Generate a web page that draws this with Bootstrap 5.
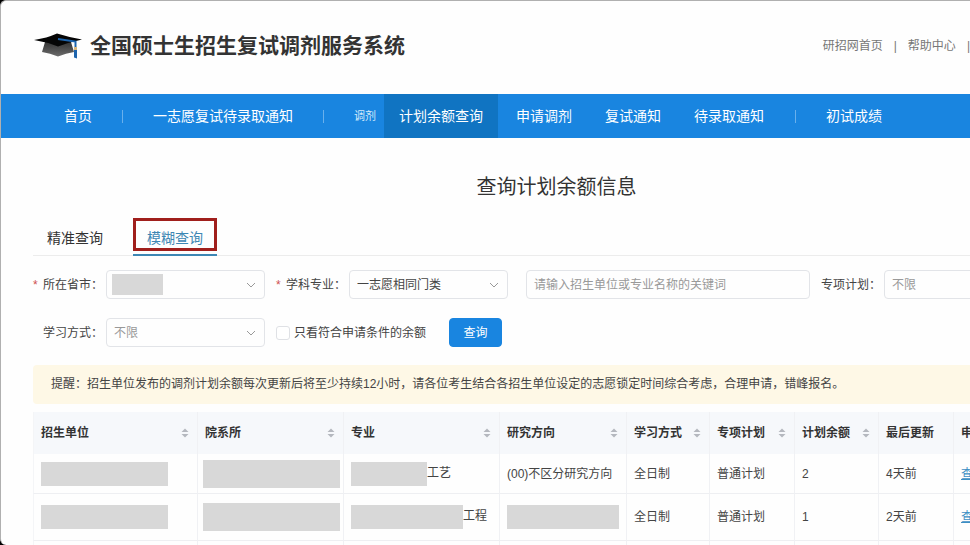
<!DOCTYPE html>
<html lang="zh-CN">
<head>
<meta charset="utf-8">
<meta name="viewport" content="width=device-width, initial-scale=1">
<title>全国硕士生招生复试调剂服务系统</title>
<link href="https://cdn.jsdelivr.net/npm/bootstrap@5.3.0/dist/css/bootstrap.min.css" rel="stylesheet">
<style>
  body { background: #000; color: #444; font: 12px/20px "Liberation Sans", "Noto Sans CJK SC", sans-serif; }
  .window { background: #fefefe; border: 1px solid #b0b0b0; border-width: 1px 0 0 1px; border-radius: 6px 0 0 6px; }
  .wide { min-width: 1112px; }
  .site-head { height: 93px; padding: 0 0 4px 33px; }
  .site-name { font-size: 21px; line-height: 28px; color: #333; }
  .top-links { gap: 11px; color: #777; }
  .top-links a { color: #777; text-decoration: none; }
  .main-nav { background: #1985e0; height: 44px; padding-left: 33px; font-size: 14px; }
  .main-nav a { color: #fff; text-decoration: none; display: flex; align-items: center; align-self: stretch; padding: 0 15px; }
  .main-nav a.top-item { padding: 0 30px; }
  .main-nav a.active { background: #1074c2; }
  .nav-rule { width: 1px; height: 13px; background: #69b0ec; }
  .nav-group { font-size: 11px; color: #d5eafb; padding: 0 8px 0 30px; }
  .sub-items { gap: 3px; }
  .content-area { padding: 34px 33px 0 32px; }
  .page-title { font-size: 20px; line-height: 30px; color: #333; margin-bottom: 16px; }
  .query-tabs { gap: 16px; border-bottom: 1px solid #ececec; margin-bottom: 14px; }
  .query-tabs button { background: none; border: 0; border-bottom: 2px solid transparent; padding: 0 0 3px; margin-bottom: -1px; font-size: 14px; line-height: 20px; color: #333; }
  .query-tabs button span { display: block; border: 3px solid transparent; padding: 7px 11px 0; }
  .query-tabs button.active { color: #3d87b4; border-bottom-color: #3d87b4; }
  .query-tabs button.active span { border-color: #a01f1c; }
  .query-form { display: grid; gap: 19px; }
  .query-row { gap: 11px; }
  .query-label { width: 63px; flex: none; white-space: nowrap; }
  .req { width: 10px; flex: none; color: #cf5050; text-align: left; }
  .field { width: 159px; height: 29px; flex: none; font-size: 12px; line-height: 20px; padding: 3px 7px; color: #444; border-color: #e2e4e8; border-radius: 4px; background-color: transparent; }
  .form-select.field { padding-right: 26px; background-position: right 8px center; background-size: 10px 10px;
    --bs-form-select-bg-img: url("data:image/svg+xml,%3csvg xmlns='http://www.w3.org/2000/svg' viewBox='0 0 10 10'%3e%3cpath d='M1 3l4 4 4-4' fill='none' stroke='%23999' stroke-width='1'/%3e%3c/svg%3e"); }
  .form-select.masked { background-image: var(--bs-form-select-bg-img), linear-gradient(#d8d8d8, #d8d8d8); background-size: 10px 10px, 51px 21px; background-position: right 8px center, 5px center; background-repeat: no-repeat; }
  .form-select.field.unset, .field::placeholder { color: #999; }
  .keyword { width: 284px; margin-left: 7px; }
  .only-match { width: 14px; height: 14px; margin: 0; border-color: #dfe1e5; border-radius: 2px; }
  .btn-query { height: 29px; width: 53px; font-size: 12px; line-height: 20px; padding: 3px 0; background: #1985e0; border-color: #1985e0; color: #fff; border-radius: 4px; margin-left: 12px; }
  .tip { background: #fef8e6; padding: 9px 18px 10px; margin: 18px 0 8px; border-radius: 4px; white-space: nowrap; }
  .plan-table { table-layout: fixed; width: 100%; border-collapse: separate; border-spacing: 0; }
  .plan-table th, .plan-table td { padding: 0 8px 0 7px; border-right: 1px solid #f0f1f4; white-space: nowrap; vertical-align: middle; }
  .plan-table td { border-bottom: 1px solid #eeeff2; }
  .plan-table th { background: #f6f8fb; height: 42px; color: #333; }
  .plan-table tr > :first-child { border-left: 1px solid #f4f5f7; }
  .plan-table td { height: 40px; }
  .plan-table .tall-row td { height: 47px; }
  .plan-table a { color: #3d8fc4; }
  .mask { display: inline-block; vertical-align: middle; background: #d8d8d8; height: 24px; }
  .mask-xl { width: 137px; height: 28px; margin-left: -2px; margin-right: -2px; }
  .mask-lg { width: 127px; }
  .mask-md { width: 112px; }
  .mask-sm { width: 76px; }
</style>
<script src="https://cdn.jsdelivr.net/npm/bootstrap@5.3.0/dist/js/bootstrap.bundle.min.js"></script>
</head>
<body>
<svg class="d-none" aria-hidden="true"><symbol id="sort" viewBox="0 0 8 10"><path d="M4 0.5L7.5 4h-7zM4 9.5L0.5 6h7z" fill="#b5b8bf"/></symbol></svg>
<div class="window vh-100 overflow-hidden">
  <header class="site-head d-flex align-items-center">
    <svg class="me-2 flex-shrink-0" width="48" height="26" viewBox="0 0 48 26" aria-hidden="true">
      <defs><linearGradient id="cap" x2="0" y2="1"><stop stop-color="#333"/><stop offset="1" stop-color="#6c6c6c"/></linearGradient></defs>
      <path d="M11 9L8 19Q16 20 24 23.500Q32 20 40 19L37 9z" fill="url(#cap)"/>
      <path d="M0 7Q13 5 23 0.500Q34 4 48 6.500Q36 9 24 13.500Q13 9 0 7z" fill="#050505"/>
      <path d="M24 6L41.500 8.500V15" fill="none" stroke="#1d64ad" stroke-width="2"/>
      <path d="M40 14h3v3h-3z" fill="#d9b77d"/>
      <path d="M40 17h3v8.500l-3-1z" fill="#1d64ad"/>
    </svg>
    <h1 class="site-name fw-bold mb-0">全国硕士生招生复试调剂服务系统</h1>
    <div class="top-links d-flex ms-auto">
      <a href="#">研招网首页</a><span>|</span><a href="#">帮助中心</a><span>|</span>
    </div>
  </header>

  <nav class="main-nav wide d-flex align-items-center text-nowrap" aria-label="主导航">
    <a class="top-item" href="#">首页</a>
    <span class="nav-rule"></span>
    <a class="top-item" href="#">一志愿复试待录取通知</a>
    <span class="nav-rule"></span>
    <span class="nav-group">调剂</span>
    <div class="sub-items d-flex align-self-stretch">
      <a class="active" href="#" aria-current="page">计划余额查询</a>
      <a href="#">申请调剂</a>
      <a href="#">复试通知</a>
      <a href="#">待录取通知</a>
    </div>
    <span class="nav-rule ms-3"></span>
    <a class="top-item" href="#">初试成绩</a>
  </nav>

  <main class="content-area wide">
    <h2 class="page-title text-center fw-normal">查询计划余额信息</h2>
    <div class="query-tabs d-flex" role="tablist">
      <button type="button" role="tab" aria-selected="false"><span>精准查询</span></button>
      <button type="button" role="tab" aria-selected="true" class="active"><span>模糊查询</span></button>
    </div>

    <form class="query-form">
      <div class="query-row d-flex align-items-center">
        <div class="d-flex align-items-center">
          <span class="req">*</span><label class="query-label" for="province">所在省市：</label>
          <select class="form-select field masked" id="province"><option></option></select>
        </div>
        <div class="d-flex align-items-center">
          <span class="req">*</span><label class="query-label" for="subject">学科专业：</label>
          <select class="form-select field" id="subject"><option>一志愿相同门类</option></select>
        </div>
        <input class="form-control field keyword" type="text" aria-label="关键词" placeholder="请输入招生单位或专业名称的关键词">
        <div class="d-flex align-items-center">
          <label class="query-label" for="special">专项计划：</label>
          <select class="form-select field unset" id="special"><option>不限</option></select>
        </div>
      </div>
      <div class="query-row d-flex align-items-center">
        <div class="d-flex align-items-center">
          <span class="req"></span><label class="query-label" for="mode">学习方式：</label>
          <select class="form-select field unset" id="mode"><option>不限</option></select>
        </div>
        <div class="d-flex align-items-center gap-1">
          <input class="form-check-input only-match" type="checkbox" id="match">
          <label for="match">只看符合申请条件的余额</label>
        </div>
        <button class="btn btn-query" type="button">查询</button>
      </div>
    </form>

    <div class="tip">提醒：招生单位发布的调剂计划余额每次更新后将至少持续12小时，请各位考生结合各招生单位设定的志愿锁定时间综合考虑，合理申请，错峰报名。</div>

    <table class="plan-table">
      <colgroup><col style="width:165px"><col style="width:146px"><col style="width:156px"><col style="width:127px"><col style="width:83px"><col style="width:85px"><col style="width:84px"><col style="width:75px"><col></colgroup>
      <thead>
        <tr>
          <th><div class="d-flex align-items-center justify-content-between">招生单位<svg width="8" height="10"><use href="#sort"/></svg></div></th>
          <th><div class="d-flex align-items-center justify-content-between">院系所<svg width="8" height="10"><use href="#sort"/></svg></div></th>
          <th><div class="d-flex align-items-center justify-content-between">专业<svg width="8" height="10"><use href="#sort"/></svg></div></th>
          <th><div class="d-flex align-items-center justify-content-between">研究方向<svg width="8" height="10"><use href="#sort"/></svg></div></th>
          <th><div class="d-flex align-items-center justify-content-between">学习方式<svg width="8" height="10"><use href="#sort"/></svg></div></th>
          <th><div class="d-flex align-items-center justify-content-between">专项计划<svg width="8" height="10"><use href="#sort"/></svg></div></th>
          <th><div class="d-flex align-items-center justify-content-between">计划余额<svg width="8" height="10"><use href="#sort"/></svg></div></th>
          <th>最后更新</th>
          <th>申</th>
        </tr>
      </thead>
      <tbody>
        <tr>
          <td><span class="mask mask-lg"></span></td>
          <td><span class="mask mask-xl"></span></td>
          <td><span class="mask mask-sm"></span>工艺</td>
          <td>(00)不区分研究方向</td>
          <td>全日制</td>
          <td>普通计划</td>
          <td>2</td>
          <td>4天前</td>
          <td><a href="#">查</a></td>
        </tr>
        <tr class="tall-row">
          <td><span class="mask mask-lg"></span></td>
          <td><span class="mask mask-xl"></span></td>
          <td><span class="mask mask-md"></span>工程</td>
          <td><span class="mask mask-md"></span></td>
          <td>全日制</td>
          <td>普通计划</td>
          <td>1</td>
          <td>2天前</td>
          <td><a href="#">查</a></td>
        </tr>
        <tr><td></td><td></td><td></td><td></td><td></td><td></td><td></td><td></td><td></td></tr>
      </tbody>
    </table>
  </main>
</div>
</body>
</html>
